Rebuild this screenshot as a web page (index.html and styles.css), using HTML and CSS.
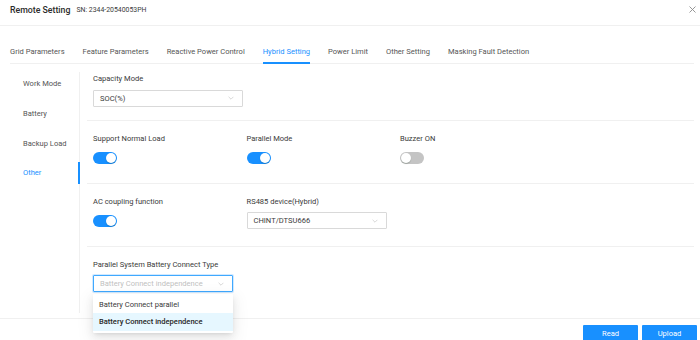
FILE: index.html
```
<!DOCTYPE html>
<html lang="en">
<head>
<meta charset="utf-8">
<title>Remote Setting</title>
<link rel="stylesheet" href="styles.css">
</head>
<body>
<div class="modal">
  <header class="modal-header">
    <span class="title">Remote Setting</span>
    <span class="sn">SN: 2344-20540053PH</span>
    <span class="close"><svg width="7" height="7" viewBox="0 0 7 7"><path d="M0.5 0.5 L6.5 6.5 M6.5 0.5 L0.5 6.5" stroke="#8c8c8c" stroke-width="0.9" fill="none"/></svg></span>
  </header>
  <nav class="tabs">
    <span class="tab">Grid Parameters</span>
    <span class="tab">Feature Parameters</span>
    <span class="tab">Reactive Power Control</span>
    <span class="tab active">Hybrid Setting</span>
    <span class="tab">Power Limit</span>
    <span class="tab">Other Setting</span>
    <span class="tab">Masking Fault Detection</span>
  </nav>
  <div class="panel">
    <aside class="side">
      <div class="side-item">Work Mode</div>
      <div class="side-item">Battery</div>
      <div class="side-item">Backup Load</div>
      <div class="side-item active">Other</div>
    </aside>
    <main class="content">
      <section class="sec sec-first">
        <div class="item">
          <div class="label">Capacity Mode</div>
          <div class="control">
            <div class="select w150"><span>SOC(%)</span><svg class="chev" width="6" height="4" viewBox="0 0 10 6"><path d="M1 1 L5 5 L9 1" stroke="#bfbfbf" stroke-width="1" fill="none"/></svg></div>
          </div>
        </div>
      </section>
      <section class="sec grid3">
        <div class="item">
          <div class="label">Support Normal Load</div>
          <div class="control"><span class="switch on"><span class="knob"></span></span></div>
        </div>
        <div class="item">
          <div class="label">Parallel Mode</div>
          <div class="control"><span class="switch on"><span class="knob"></span></span></div>
        </div>
        <div class="item">
          <div class="label">Buzzer ON</div>
          <div class="control"><span class="switch off"><span class="knob"></span></span></div>
        </div>
      </section>
      <section class="sec grid3">
        <div class="item">
          <div class="label">AC coupling function</div>
          <div class="control"><span class="switch on"><span class="knob"></span></span></div>
        </div>
        <div class="item">
          <div class="label">RS485 device(Hybrid)</div>
          <div class="control">
            <div class="select w140"><span>CHINT/DTSU666</span><svg class="chev" width="6" height="4" viewBox="0 0 10 6"><path d="M1 1 L5 5 L9 1" stroke="#bfbfbf" stroke-width="1" fill="none"/></svg></div>
          </div>
        </div>
      </section>
      <section class="sec sec-last">
        <div class="item">
          <div class="label">Parallel System Battery Connect Type</div>
          <div class="control">
            <div class="select-wrap">
              <div class="select w140 focused"><span class="ph">Battery Connect independence</span><svg class="chev" width="6" height="4" viewBox="0 0 10 6"><path d="M1 1 L5 5 L9 1" stroke="#bfbfbf" stroke-width="1" fill="none"/></svg></div>
              <div class="dropdown">
                <div class="option">Battery Connect parallel</div>
                <div class="option selected">Battery Connect independence</div>
              </div>
            </div>
          </div>
        </div>
      </section>
    </main>
  </div>
  <footer class="modal-footer">
    <button class="btn">Read</button>
    <button class="btn">Upload</button>
  </footer>
</div>
</body>
</html>
```
FILE: styles.css
```
* { box-sizing: border-box; }
html, body { margin: 0; padding: 0; background: #fff; }
body {
  font-family: Roboto, "Liberation Sans", Arial, sans-serif;
  font-size: 7.55px;
  color: #3a3a3a;
  width: 700px;
  height: 340px;
  overflow: hidden;
}
.modal { width: 700px; }

.modal-header {
  height: 26px;
  border-bottom: 1px solid #f0f0f0;
  display: flex;
  align-items: center;
  padding: 0 4px 6px 10px;
}
.title { font-size: 8.75px; font-weight: 500; color: #2b2b2b; }
.sn { font-size: 6.9px; margin-left: 6px; color: #3a3a3a; }
.close { margin-left: auto; display: flex; }

.tabs {
  display: flex;
  margin: 16px 6px 0 10px;
  border-bottom: 1px solid #f0f0f0;
}
.tab {
  line-height: 20px;
  border-bottom: 2px solid transparent;
  margin-bottom: -1px;
  margin-right: 18px;
  color: #555;
}
.tab.active { color: #1890ff; border-bottom-color: #1890ff; }

.panel {
  height: 254px;
  display: flex;
  padding-bottom: 5px;
}
.side {
  width: 80px;
  flex: none;
  margin-top: 8px;
  padding-top: 1px;
  border-right: 1px solid #f0f0f0;
  display: flex;
  flex-direction: column;
  gap: 8.3px;
}
.side-item {
  height: 21.5px;
  line-height: 21.5px;
  padding-left: 23px;
  margin-right: -1px;
  border-right: 2px solid transparent;
  color: #555;
}
.side-item.active { color: #1890ff; border-right-color: #1890ff; }

.content {
  flex: 1;
  padding: 0 6px 0 7px;
  position: relative;
}
.sec {
  border-bottom: 1px solid #f0f0f0;
  padding: 11.5px 6px 17px;
}
.sec-first { padding-top: 9px; padding-bottom: 13.5px; }
.sec-last { border-bottom: none; }
.grid3 { display: grid; grid-template-columns: repeat(3, 153.5px); }

.label { height: 11px; line-height: 11px; color: #3a3a3a; }
.control {
  margin-top: 5.5px;
  height: 17px;
  display: flex;
  align-items: center;
}

.select {
  height: 17px;
  border: 1px solid #d9d9d9;
  border-radius: 1px;
  display: flex;
  align-items: center;
  padding: 0 8px 0 6px;
  color: #3a3a3a;
  background: #fff;
}
.select .chev { margin-left: auto; }
.w150 { width: 150px; }
.w140 { width: 140px; }
.select.focused {
  border-color: #40a9ff;
  box-shadow: 0 0 0 1px rgba(24, 144, 255, 0.2);
}
.ph { color: #bfbfbf; }

.select-wrap { position: relative; }
.dropdown {
  position: absolute;
  top: 18.5px;
  left: 0;
  width: 140px;
  background: #fff;
  padding: 2.2px 0;
  border-radius: 1px;
  box-shadow: 0 2px 4px -2px rgba(0,0,0,0.12), 0 3px 9px 0 rgba(0,0,0,0.08), 0 5px 15px 4px rgba(0,0,0,0.05);
  z-index: 5;
}
.option {
  height: 17.5px;
  line-height: 17.5px;
  padding: 0 6px;
  color: #3a3a3a;
}
.option.selected { background: #e6f7ff; font-weight: 500; color: #262626; }

.switch {
  position: relative;
  display: inline-block;
  width: 24px;
  height: 12px;
  border-radius: 6px;
}
.switch.on { background: #1890ff; }
.switch.off { background: #c4c4c4; }
.knob {
  position: absolute;
  top: 1px;
  width: 10px;
  height: 10px;
  border-radius: 50%;
  background: #fff;
  box-shadow: 0 1px 1px rgba(0,35,11,0.2);
}
.switch.on .knob { left: 13px; }
.switch.off .knob { left: 1px; }

.modal-footer {
  border-top: 1px solid #f0f0f0;
  display: flex;
  justify-content: flex-end;
  gap: 4px;
  padding: 5.5px 3px 0 0;
}
.btn {
  width: 55px;
  height: 17.5px;
  border: none;
  border-radius: 1px;
  background: #1890ff;
  color: #fff;
  font-family: inherit;
  font-size: 7.55px;
  padding: 0;
  margin: 0;
}
```
